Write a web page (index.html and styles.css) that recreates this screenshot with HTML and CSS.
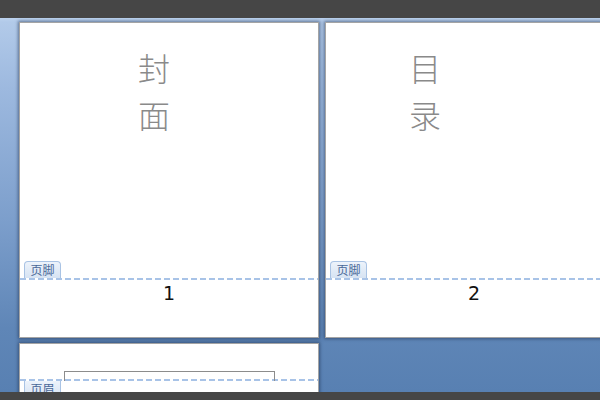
FILE: index.html
```html
<!DOCTYPE html>
<html lang="zh-CN">
<head>
  <meta charset="UTF-8">
  <title>页面视图</title>
  <link rel="stylesheet" href="styles.css">
</head>
<body>

  <div class="topbar"></div>

  <div class="workspace">
    <div class="page-row">
      <div class="page">
        <div class="page-body">
          <div class="page-title title-cover">封<br>面</div>
        </div>
        <div class="page-footer">
          <span class="hf-tab tab-footer">页脚</span>
          <div class="page-num">1</div>
        </div>
      </div>

      <div class="page page-wide">
        <div class="page-body">
          <div class="page-title title-toc">目<br>录</div>
        </div>
        <div class="page-footer">
          <span class="hf-tab tab-footer">页脚</span>
          <div class="page-num">2</div>
        </div>
      </div>
    </div>

    <div class="page-row">
      <div class="page page-next">
        <div class="page-header">
          <div class="header-box"></div>
          <span class="hf-tab tab-header">页眉</span>
        </div>
      </div>
    </div>
  </div>

  <div class="bottombar"></div>

</body>
</html>
```

FILE: styles.css
```css
body {
  margin: 0;
  width: 600px;
  height: 400px;
  overflow: hidden;
  background-color: #464646;
  font-family: 'DejaVu Sans', sans-serif;
}

.topbar {
  height: 18px;
  background-color: #464646;
}

.bottombar {
  height: 8px;
  background-color: #464646;
}

.workspace {
  height: 374px;
  overflow: hidden;
  box-sizing: border-box;
  padding: 4px 0 0 19px;
  display: flex;
  flex-direction: column;
  gap: 5px;
  background: linear-gradient(to bottom, #bcd2ee 0, #b2cae9 4px, #9db9df 70px, #7d9fcc 200px, #5f86b7 310px, #5880b2 100%);
}

.page-row {
  display: flex;
  gap: 6px;
}

.page {
  position: relative;
  flex: none;
  width: 300px;
  height: 316px;
  box-sizing: border-box;
  background-color: #fff;
  border: 1px solid #a4a4a4;
  box-shadow: 0 0 3px 1px rgba(25, 45, 80, 0.55);
  display: flex;
  flex-direction: column;
}

.page-wide {
  width: 320px;
}

.page-body {
  flex: 1;
}

.page-title {
  font-family: 'Noto Sans CJK SC', sans-serif;
  font-weight: 300;
  font-size: 32px;
  line-height: 47px;
  color: #8a8a8a;
  padding-top: 21px;
}

.title-cover {
  padding-left: 118px;
}

.title-toc {
  padding-left: 83px;
}

.page-footer {
  position: relative;
  height: 59px;
  background: repeating-linear-gradient(to right, #a8c3e7 0 6px, transparent 6px 9px) top left / 100% 2px no-repeat;
}

.page-num {
  text-align: center;
  font-size: 19px;
  color: #111;
  padding-top: 4px;
}

.page-wide .page-num {
  text-align: left;
  padding-left: 142px;
}

.hf-tab {
  position: absolute;
  left: 4px;
  width: 37px;
  height: 17px;
  box-sizing: border-box;
  font-family: 'Noto Sans CJK SC', sans-serif;
  font-size: 12px;
  line-height: 16px;
  text-align: center;
  color: #4a6898;
  background: linear-gradient(to bottom, #edf3fb, #d6e3f3);
  border: 1px solid #a9c3e4;
}

.tab-footer {
  top: -17px;
  border-bottom: none;
  border-radius: 4px 4px 0 0;
}

.tab-header {
  top: 37px;
  border-top: none;
  border-radius: 0 0 4px 4px;
}

.page-next {
  height: 60px;
}

.page-header {
  position: relative;
  height: 37px;
  background: repeating-linear-gradient(to right, #a8c3e7 0 6px, transparent 6px 9px) bottom left / 100% 2px no-repeat;
}

.header-box {
  margin: 27px 0 0 44px;
  width: 211px;
  height: 10px;
  box-sizing: border-box;
  border: 1px solid #8c8c8c;
  border-bottom: none;
}
```
